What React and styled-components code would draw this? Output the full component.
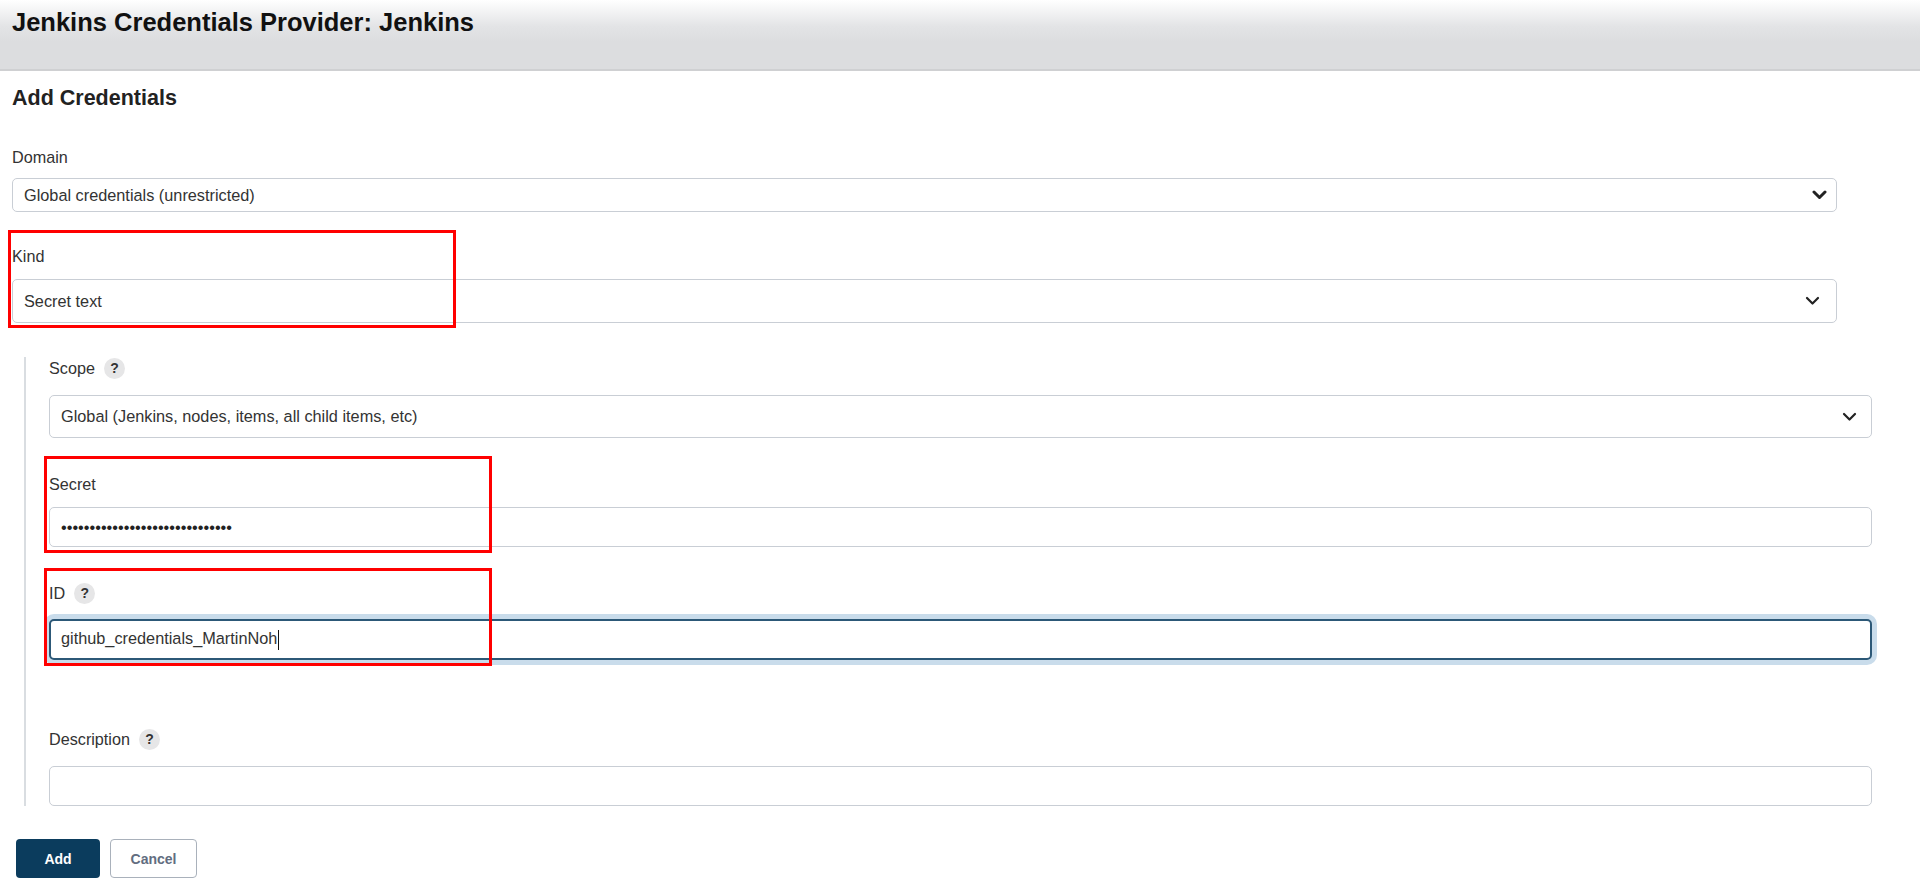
import styled, { createGlobalStyle } from "styled-components";

const GlobalStyle = createGlobalStyle`
  html, body {
    margin: 0;
    padding: 0;
    background: #fff;
  }
  body {
    font-family: "Liberation Sans", Arial, sans-serif;
    color: #333;
  }
`;

const Header = styled.header`
  height: 71px;
  padding: 8px 12px 0;
  box-sizing: border-box;
  background: linear-gradient(to bottom, #ffffff 0%, #e3e4e6 38%, #dcdddf 60%, #dcdddf 100%);
  border-bottom: 2px solid #cfd0d2;
`;

const Title = styled.h1`
  margin: 0;
  font-size: 25.5px;
  line-height: 28px;
  font-weight: bold;
  color: #111;
`;

const Main = styled.main`
  padding: 0 12px;
`;

const SectionTitle = styled.h2`
  margin: 15px 0 0;
  font-size: 21.5px;
  line-height: 24px;
  font-weight: bold;
  color: #222;
`;

const Field = styled.div`
  position: relative;
  display: flex;
  flex-direction: column;
  gap: ${(p) => p.$gap}px;
  margin-top: ${(p) => p.$top}px;
  margin-right: ${(p) => p.$right}px;
`;

const LabelRow = styled.div`
  display: flex;
  align-items: center;
  gap: 9px;
  height: 20px;
  font-size: 16.2px;
  color: #333;
`;

const Help = styled.span`
  width: 21px;
  height: 21px;
  border-radius: 50%;
  background: #e6e6e7;
  color: #333;
  font-size: 14px;
  font-weight: bold;
  display: inline-flex;
  align-items: center;
  justify-content: center;
`;

const Box = styled.div`
  display: flex;
  align-items: center;
  justify-content: space-between;
  box-sizing: border-box;
  height: ${(p) => p.$h}px;
  padding: 0 ${(p) => p.$pr || 12}px 0 11px;
  border: 1.5px solid #c9ced5;
  border-radius: 5px;
  background: #fff;
  font-size: 16.3px;
  color: #333;
  white-space: nowrap;
`;

const FocusBox = styled(Box)`
  border: 2px solid #2c5877;
  box-shadow: 0 0 0 5px #c9dceb;
  padding-left: 10px;
`;

const Caret = styled.span`
  display: inline-block;
  width: 1px;
  height: 20px;
  background: #111;
  margin-left: 1px;
  vertical-align: middle;
`;

const Dots = styled.span`
  font-size: 16.3px;
  color: #222;
`;

const Nested = styled.div`
  margin-top: 34px;
  margin-left: 12px;
  padding: 1px 0 0 23px;
  border-left: 2px solid #d9dde1;
`;

const Highlight = styled.div`
  position: absolute;
  top: ${(p) => p.$top}px;
  left: ${(p) => p.$left}px;
  width: 448px;
  height: ${(p) => p.$h}px;
  box-sizing: border-box;
  border: 3px solid #ff0000;
  pointer-events: none;
`;

const Actions = styled.div`
  display: flex;
  gap: 10px;
  margin-top: 33px;
  padding-left: 4px;
`;

const Button = styled.button`
  height: 39px;
  box-sizing: border-box;
  border-radius: 4px;
  font-family: "Liberation Sans", Arial, sans-serif;
  font-size: 14px;
  font-weight: bold;
  cursor: pointer;
  ${(p) =>
    p.$primary
      ? `
      width: 84px;
      background: #0b3c5d;
      color: #fff;
      border: none;
    `
      : `
      width: 87px;
      background: #fff;
      color: #626d80;
      border: 1.5px solid #a9b1bb;
    `}
`;

function Chevron({ stroke = 2.4 }) {
  return (
    <svg width="15" height="10" viewBox="0 0 15 10">
      <polyline
        points="2,2 7.5,7.5 13,2"
        fill="none"
        stroke="#222"
        strokeWidth={stroke}
        strokeLinecap="round"
        strokeLinejoin="round"
      />
    </svg>
  );
}

export default function App() {
  return (
    <>
      <GlobalStyle />
      <Header>
        <Title>Jenkins Credentials Provider: Jenkins</Title>
      </Header>
      <Main>
        <SectionTitle>Add Credentials</SectionTitle>

        <Field $top={37} $gap={11} $right={71}>
          <LabelRow>Domain</LabelRow>
          <Box $h={34} $pr={9}>
            Global credentials (unrestricted)
            <Chevron stroke={3} />
          </Box>
        </Field>

        <Field $top={34} $gap={13} $right={71}>
          <LabelRow>Kind</LabelRow>
          <Box $h={44} $pr={16}>
            Secret text
            <Chevron stroke={2.2} />
          </Box>
          <Highlight $top={-16} $left={-4} $h={98} />
        </Field>

        <Nested>
          <Field $top={0} $gap={17} $right={36}>
            <LabelRow>
              Scope <Help>?</Help>
            </LabelRow>
            <Box $h={43} $pr={14}>
              Global (Jenkins, nodes, items, all child items, etc)
              <Chevron stroke={2.2} />
            </Box>
          </Field>

          <Field $top={36} $gap={13} $right={36}>
            <LabelRow>Secret</LabelRow>
            <Box $h={40}>
              <Dots>{"\u2022".repeat(30)}</Dots>
            </Box>
            <Highlight $top={-18} $left={-5} $h={97} />
          </Field>

          <Field $top={36} $gap={16} $right={36}>
            <LabelRow>
              ID <Help>?</Help>
            </LabelRow>
            <FocusBox $h={41}>
              <span>
                github_credentials_MartinNoh
                <Caret />
              </span>
            </FocusBox>
            <Highlight $top={-15} $left={-5} $h={98} />
          </Field>

          <Field $top={69} $gap={17} $right={36}>
            <LabelRow>
              Description <Help>?</Help>
            </LabelRow>
            <Box $h={40} />
          </Field>
        </Nested>

        <Actions>
          <Button $primary>Add</Button>
          <Button>Cancel</Button>
        </Actions>
      </Main>
    </>
  );
}
